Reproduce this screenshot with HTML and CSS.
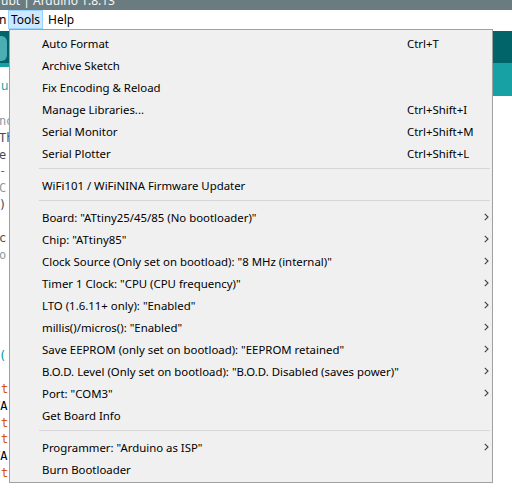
FILE: index.html
```html
<!DOCTYPE html>
<html>
<head>
<meta charset="utf-8">
<link rel="stylesheet" href="styles.css">
</head>
<body>
<div class="titlebar"><span class="title-text">ubt | Arduino 1.8.13</span></div>
<div class="menubar">
  <span class="mb-item mb-cut">n</span>
  <span class="mb-item mb-active">Tools</span>
  <span class="mb-item mb-help">Help</span>
</div>
<div class="toolbar"><div class="tb-btn"></div></div>
<div class="tabbar"><div class="tab"><span class="tab-name">u</span></div></div>
<div class="editor">
  <div class="ln com">no</div>
  <div class="ln dk">Th</div>
  <div class="ln dk">e</div>
  <div class="ln blu">-</div>
  <div class="ln com">C</div>
  <div class="ln dk">)</div>
  <div class="ln"></div>
  <div class="ln dk">c</div>
  <div class="ln com">o</div>
  <div class="ln"></div>
  <div class="ln"></div>
  <div class="ln"></div>
  <div class="ln"></div>
  <div class="ln"></div>
  <div class="ln blu">(</div>
  <div class="ln"></div>
  <div class="ln org">t</div>
  <div class="ln blk">TA</div>
  <div class="ln org">t</div>
  <div class="ln org">t</div>
  <div class="ln blk">TA</div>
  <div class="ln org">t</div>
</div>

<div class="menu">
  <div class="mi"><span class="label">Auto Format</span><span class="key">Ctrl+T</span></div>
  <div class="mi"><span class="label">Archive Sketch</span></div>
  <div class="mi"><span class="label">Fix Encoding &amp; Reload</span></div>
  <div class="mi"><span class="label">Manage Libraries...</span><span class="key">Ctrl+Shift+I</span></div>
  <div class="mi"><span class="label">Serial Monitor</span><span class="key">Ctrl+Shift+M</span></div>
  <div class="mi"><span class="label">Serial Plotter</span><span class="key">Ctrl+Shift+L</span></div>
  <div class="sep"></div>
  <div class="mi"><span class="label">WiFi101 / WiFiNINA Firmware Updater</span></div>
  <div class="sep"></div>
  <div class="mi"><span class="label">Board: "ATtiny25/45/85 (No bootloader)"</span><svg class="arrow" width="5" height="8" viewBox="0 0 5 8"><path d="M0.8 0.8 L4 4 L0.8 7.2" fill="none" stroke="#404040" stroke-width="1.1"/></svg></div>
  <div class="mi"><span class="label">Chip: "ATtiny85"</span><svg class="arrow" width="5" height="8" viewBox="0 0 5 8"><path d="M0.8 0.8 L4 4 L0.8 7.2" fill="none" stroke="#404040" stroke-width="1.1"/></svg></div>
  <div class="mi"><span class="label">Clock Source (Only set on bootload): "8 MHz (internal)"</span><svg class="arrow" width="5" height="8" viewBox="0 0 5 8"><path d="M0.8 0.8 L4 4 L0.8 7.2" fill="none" stroke="#404040" stroke-width="1.1"/></svg></div>
  <div class="mi"><span class="label">Timer 1 Clock: "CPU (CPU frequency)"</span><svg class="arrow" width="5" height="8" viewBox="0 0 5 8"><path d="M0.8 0.8 L4 4 L0.8 7.2" fill="none" stroke="#404040" stroke-width="1.1"/></svg></div>
  <div class="mi"><span class="label">LTO (1.6.11+ only): "Enabled"</span><svg class="arrow" width="5" height="8" viewBox="0 0 5 8"><path d="M0.8 0.8 L4 4 L0.8 7.2" fill="none" stroke="#404040" stroke-width="1.1"/></svg></div>
  <div class="mi"><span class="label">millis()/micros(): "Enabled"</span><svg class="arrow" width="5" height="8" viewBox="0 0 5 8"><path d="M0.8 0.8 L4 4 L0.8 7.2" fill="none" stroke="#404040" stroke-width="1.1"/></svg></div>
  <div class="mi"><span class="label">Save EEPROM (only set on bootload): "EEPROM retained"</span><svg class="arrow" width="5" height="8" viewBox="0 0 5 8"><path d="M0.8 0.8 L4 4 L0.8 7.2" fill="none" stroke="#404040" stroke-width="1.1"/></svg></div>
  <div class="mi"><span class="label">B.O.D. Level (Only set on bootload): "B.O.D. Disabled (saves power)"</span><svg class="arrow" width="5" height="8" viewBox="0 0 5 8"><path d="M0.8 0.8 L4 4 L0.8 7.2" fill="none" stroke="#404040" stroke-width="1.1"/></svg></div>
  <div class="mi"><span class="label">Port: "COM3"</span><svg class="arrow" width="5" height="8" viewBox="0 0 5 8"><path d="M0.8 0.8 L4 4 L0.8 7.2" fill="none" stroke="#404040" stroke-width="1.1"/></svg></div>
  <div class="mi"><span class="label">Get Board Info</span></div>
  <div class="sep"></div>
  <div class="mi"><span class="label">Programmer: "Arduino as ISP"</span><svg class="arrow" width="5" height="8" viewBox="0 0 5 8"><path d="M0.8 0.8 L4 4 L0.8 7.2" fill="none" stroke="#404040" stroke-width="1.1"/></svg></div>
  <div class="mi"><span class="label">Burn Bootloader</span></div>
</div>
</body>
</html>
```
FILE: styles.css
```css
* { box-sizing: border-box; margin: 0; padding: 0; }
html, body { width: 512px; height: 490px; overflow: hidden; background: #fff; }
body {
  position: relative;
  font-family: "Noto Sans", "Liberation Sans", sans-serif;
  font-size: 11.4px;
  color: #000;
}
.titlebar {
  height: 10px;
  background: #6b7c81;
  overflow: hidden;
  color: #f4f6f6;
  font-size: 12px;
}
.title-text {
  display: block;
  margin-top: -7px;
  line-height: 16px;
  padding-left: 1px;
}
.menubar {
  height: 21px;
  background: #fff;
  display: flex;
  align-items: flex-start;
}
.mb-item {
  height: 19px;
  line-height: 19px;
  font-size: 12px;
}
.mb-cut { width: 9px; margin-left: -1px; }
.mb-active {
  width: 35px;
  text-align: center;
  background: #cce8ff;
  border: 1px solid #99d1ff;
  line-height: 17px;
}
.mb-help { margin-left: 5px; }
.toolbar {
  height: 32px;
  background: #006468;
  padding-top: 5px;
}
.tb-btn {
  width: 8px;
  height: 25px;
  background: #4aaeb2;
  border-right: 1px solid #0b5c60;
  border-radius: 0 6px 6px 0;
}
.tabbar {
  height: 33px;
  background: #17a1a5;
  padding-top: 4px;
}
.tab {
  width: 60px;
  height: 29px;
  background: #fff;
  padding: 12px 0 0 1px;
}
.tab-name { color: #17a1a5; display: block; line-height: 14px; font-size: 12px; }
.editor {
  padding-top: 17px;
  font-family: "DejaVu Sans Mono", monospace;
  font-size: 12px;
}
.ln {
  height: 16.76px;
  line-height: 16.76px;
  white-space: pre;
  margin-left: -1px;
  color: #434f54;
}
.com { color: #8a9ba3; }
.dk { color: #434f54; }
.blu { color: #00979c; }
.org { color: #d35400; margin-left: 1px; }
.blk { color: #000; margin-left: -7px; }

.menu {
  position: absolute;
  left: 9px;
  top: 29px;
  width: 484px;
  height: 454px;
  background: #f0f0f0;
  border: 1px solid #a0a0a0;
  padding: 2px 0;
}
.mi {
  display: flex;
  align-items: center;
  height: 22px;
  padding-left: 32px;
  padding-right: 3px;
  white-space: nowrap;
}
.label { width: 365px; flex: none; }
.key { flex: none; }
.arrow { margin-left: auto; flex: none; }
.sep {
  height: 1px;
  margin: 4px 2px 5px 29px;
  background: #d7d7d7;
}
```
